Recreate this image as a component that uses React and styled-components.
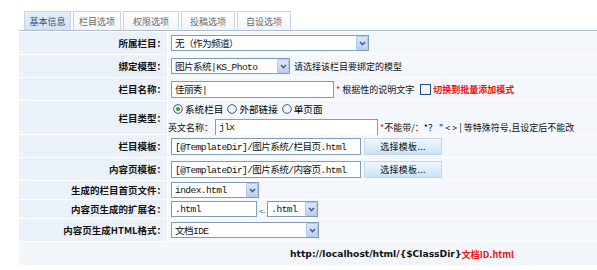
import React from 'react';
import styled, { createGlobalStyle } from 'styled-components';

const GlobalStyle = createGlobalStyle`
  body {
    margin: 0;
    background: #ffffff;
    font-family: "Noto Sans CJK SC", "Liberation Sans", sans-serif;
    font-size: 9px;
    color: #000;
  }
`;

const Page = styled.div`
  width: 597px;
  height: 270px;
  padding: 11px 0 0 19px;
  box-sizing: border-box;
  overflow: hidden;
`;

const TabBar = styled.div`
  display: flex;
  gap: 2px;
  padding-left: 5px;
  height: 19px;
  border-bottom: 1px solid #aebdd0;
`;

const Tab = styled.div`
  width: ${p => p.w}px;
  display: flex;
  align-items: center;
  justify-content: center;
  border: 1px solid #c9d4e2;
  border-bottom: none;
  font-size: 9px;
  color: ${p => (p.active ? '#2e4f7e' : '#6a6a6a')};
  background: ${p => (p.active ? 'linear-gradient(#e6eef8, #d3e1f2)' : 'linear-gradient(#ffffff, #f2f4f7)')};
  box-sizing: border-box;
`;

const Grid = styled.div`
  display: grid;
  grid-template-columns: 148px 1fr;
  column-gap: 1px;
  row-gap: 1px;
  background: #ffffff;
  margin-top: 1px;
`;

const Label = styled.div`
  height: ${p => p.h}px;
  background: #ebf1f9;
  display: flex;
  align-items: center;
  justify-content: flex-end;
  padding-right: 1px;
  font-weight: 700;
  font-size: 9.5px;
  color: #111;
  white-space: nowrap;
`;

const Cell = styled.div`
  height: ${p => p.h}px;
  background: #f4f7fc;
  display: flex;
  align-items: center;
  padding-left: 3px;
  gap: ${p => p.gap || 0}px;
  white-space: nowrap;
`;

const StackCell = styled(Cell)`
  flex-direction: column;
  align-items: flex-start;
  justify-content: flex-start;
  padding-top: 1px;
  box-sizing: border-box;
`;

const WideCell = styled.div`
  grid-column: 1 / 3;
  height: 23px;
  background: #f2f6fb;
  display: flex;
  align-items: center;
  padding-left: 271px;
  font-family: "DejaVu Sans", sans-serif;
  font-weight: 700;
  font-size: 9.2px;
  color: #111;
`;

const Red = styled.span`
  color: #f01010;
  font-weight: ${p => (p.bold ? 700 : 400)};
  font-family: ${p => (p.bold ? '"Noto Sans CJK SC", "DejaVu Sans", sans-serif' : 'inherit')};
`;

const Box = styled.div`
  width: ${p => p.w}px;
  height: 16px;
  border: 1px solid #7f9db9;
  background: #fff;
  box-sizing: border-box;
  display: flex;
  align-items: center;
  font-family: "Liberation Mono", "Noto Sans CJK SC", monospace;
  font-size: 9.6px;
  letter-spacing: -0.6px;
  color: #111;
  padding-left: 3px;
  flex-shrink: 0;
`;

const Input = styled(Box)`
  height: ${p => p.h || 17}px;
`;

const SelectText = styled.span`
  flex: 1;
  overflow: hidden;
`;

const Arrow = styled.span`
  width: 12px;
  height: 14px;
  box-sizing: border-box;
  border: 1px solid #b4c8ef;
  border-radius: 1px;
  background: linear-gradient(#dbe6fd, #bccff7);
  display: flex;
  align-items: center;
  justify-content: center;
`;

const Select = ({ w, children }) => (
  <Box w={w}>
    <SelectText>{children}</SelectText>
    <Arrow>
      <svg width="7" height="5" viewBox="0 0 7 5">
        <path d="M1 1 L3.5 3.5 L6 1" fill="none" stroke="#4c5f8a" strokeWidth="1.6" />
      </svg>
    </Arrow>
  </Box>
);

const Button = styled.div`
  width: 78px;
  height: 17px;
  box-sizing: border-box;
  border: 1px solid #c6d6e4;
  background: linear-gradient(#f0f7fd, #c9e4f7);
  display: flex;
  align-items: center;
  justify-content: center;
  font-size: 9px;
  letter-spacing: 0.3px;
  color: #111;
`;

const Hint = styled.span`
  font-size: 9px;
  color: #111;
  margin-left: ${p => p.ml || 0}px;
`;

const RadioRow = styled.div`
  display: flex;
  align-items: center;
  height: 13px;
  padding-left: 2px;
`;

const RadioItem = styled.label`
  display: flex;
  align-items: center;
  gap: 2px;
  margin-right: 4px;
  font-size: 9.6px;
`;

const NameRow = styled.div`
  display: flex;
  align-items: center;
  margin-left: -3px;
  margin-top: 4px;
  gap: 2px;
`;

const Radio = ({ on }) => (
  <svg width="10" height="10" viewBox="0 0 10 10">
    <circle cx="5" cy="5" r="4.3" fill="#fbfbfb" stroke="#2a5b8c" strokeWidth="1" />
    {on && <circle cx="5" cy="5" r="2" fill="#2f9a3c" />}
  </svg>
);

const Check = () => (
  <svg width="11" height="11" viewBox="0 0 11 11" style={{ marginLeft: 6, marginRight: 2 }}>
    <rect x="0.5" y="0.5" width="10" height="10" fill="#f4f4f4" stroke="#1f4f80" />
  </svg>
);

const Small = styled.span`
  font-size: 7px;
  color: #555;
  margin: 3px 2px 0;
`;

const tabs = [
  ['基本信息', 47, true],
  ['栏目选项', 48],
  ['权限选项', 56],
  ['投稿选项', 54],
  ['自设选项', 54],
];

export default function App() {
  return (
    <Page>
      <GlobalStyle />
      <TabBar>
        {tabs.map(([t, w, a]) => (
          <Tab key={t} w={w} active={a}>{t}</Tab>
        ))}
      </TabBar>
      <Grid>
        <Label h={22}>所属栏目：</Label>
        <Cell h={22}><Select w={198}>无（作为频道）</Select></Cell>

        <Label h={22}>绑定模型：</Label>
        <Cell h={22}>
          <Select w={119}>图片系统|KS_Photo</Select>
          <Hint ml={4}>请选择该栏目要绑定的模型</Hint>
        </Cell>

        <Label h={22}>栏目名称：</Label>
        <Cell h={22}>
          <Input w={163}>佳丽秀|</Input>
          <Red>&nbsp;*</Red>
          <Hint ml={2}>根据性的说明文字</Hint>
          <Check />
          <Red bold>切换到批量添加模式</Red>
        </Cell>

        <Label h={33}>栏目类型：</Label>
        <StackCell h={33}>
          <RadioRow>
            <RadioItem><Radio on />系统栏目</RadioItem>
            <RadioItem><Radio />外部链接</RadioItem>
            <RadioItem><Radio />单页面</RadioItem>
          </RadioRow>
          <NameRow>
            <Hint>英文名称：</Hint>
            <Input w={163}>jlx</Input>
            <Hint><Red>*</Red>不能带/：*？ " &lt; &gt; | 等特殊符号,且设定后不能改</Hint>
          </NameRow>
        </StackCell>

        <Label h={22}>栏目模板：</Label>
        <Cell h={22} gap={3}>
          <Input w={190}>[@TemplateDir]/图片系统/栏目页.html</Input>
          <Button>选择模板...</Button>
        </Cell>

        <Label h={22}>内容页模板：</Label>
        <Cell h={22} gap={3}>
          <Input w={190}>[@TemplateDir]/图片系统/内容页.html</Input>
          <Button>选择模板...</Button>
        </Cell>

        <Label h={18}>生成的栏目首页文件：</Label>
        <Cell h={18}><Select w={88}>index.html</Select></Cell>

        <Label h={18}>内容页生成的扩展名：</Label>
        <Cell h={18}>
          <Input w={86} h={16}>.html</Input>
          <Small>&lt;-</Small>
          <Select w={51}>.html</Select>
        </Cell>

        <Label h={22}>内容页生成HTML格式：</Label>
        <Cell h={22}><Select w={148}>文档IDE</Select></Cell>

        <WideCell>
          http://localhost/html/{'{$ClassDir}'}<Red bold>文档ID.html</Red>
        </WideCell>
      </Grid>
    </Page>
  );
}
